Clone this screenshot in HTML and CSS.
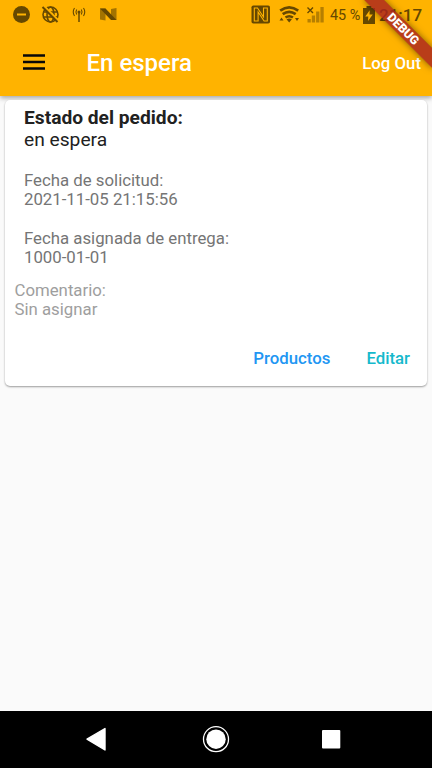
FILE: index.html
```html
<!DOCTYPE html>
<html lang="es">
<head>
<meta charset="utf-8">
<title>En espera</title>
<link rel="stylesheet" href="styles.css">
</head>
<body>
<div class="screen">
  <header class="top">
    <div class="status">
      <svg class="notices" width="130" height="30" viewBox="0 0 130 30">
        <circle cx="21.5" cy="14.5" r="8.5"/>
        <path d="M17 14.5h9" stroke="#ffb300" stroke-width="2"/>
        <g fill="none" stroke="#664800" stroke-width="1.6">
          <circle cx="50.5" cy="14.5" r="7.5"/>
          <ellipse cx="50.5" cy="14.5" rx="3.5" ry="7.5"/>
          <path d="M43.5 12h14M43.5 17h14"/>
          <path d="M44 6l15 15" stroke="#ffb300" stroke-width="2"/>
          <path d="M42.5 7l15 15" stroke-width="2"/>
        </g>
        <g fill="none" stroke="#664800" stroke-width="1.1">
          <path d="M79 12v10" stroke-width="1.5"/>
          <path d="M76.700 9.500q-1.500 2.500 0 5M81.300 9.500q1.500 2.500 0 5M74.500 8q-2.500 4 0 8M83.500 8q2.500 4 0 8"/>
        </g>
        <circle cx="79" cy="12" r="1.500"/>
        <path d="M100 8.500h5.500v12l-5.500-1zM111 9l5.500-1v12H111z" opacity=".6"/>
        <path d="M100 8.500h5.500L116.500 20H111z"/>
      </svg>
      <svg class="signals" width="80" height="30" viewBox="250 0 80 30">
        <rect x="251.500" y="5.500" width="18.500" height="18" rx="1.800"/>
        <path d="M254.300 21V8h3.200l6 9V8h3.800v13h-3.200l-6-9v9z" fill="none" stroke="#ffb300" stroke-width="1.100"/>
        <g fill="none" stroke="#664800" stroke-width="2.700">
          <path d="M280.200 10.700q9-6.500 18 0M282.700 14.200q6.500-4.700 13 0M285.500 17.500q3.700-2.500 7.400 0"/>
        </g>
        <path d="M286.500 19.300q2.700-1.400 5.400 0L289.200 22.500zM279.500 20.500l2-3 2 3zM295 18h4l-2 3z"/>
        <path d="M307.500 7.500l5.500 5.500M313 7.500l-5.500 5.500" stroke="#664800" stroke-width="1.400"/>
        <path d="M307.500 19h3.300v3.500h-3.300zM311.800 15.500h3.300v7h-3.300zM316.100 11.500h3.300v11h-3.300zM320.400 7h3.300v15.500h-3.300z" opacity=".48"/>
      </svg>
      <span class="percent">45 %</span>
      <svg class="battery" width="12" height="18" viewBox="0 0 12 18">
        <path d="M0 2h3.500V0h5v2H12v16H0z"/>
        <path d="M6.700 4.200L2.300 10.500h3L5 15l4.800-6.500H6.500z" fill="#ffb300"/>
      </svg>
      <span class="clock">21:17</span>
    </div>
    <div class="toolbar">
      <svg class="menu" width="22" height="16" viewBox="0 0 22 16"><path d="M0 1.500h22M0 8h22M0 14.500h22" stroke="#080808" stroke-width="2.400"/></svg>
      <h1>En espera</h1>
      <span class="logout">Log Out</span>
    </div>
  </header>
  <main>
    <section class="card">
      <div class="details">
        <h2>Estado del pedido:</h2>
        <p class="state">en espera</p>
        <p class="date">Fecha de solicitud:<br>2021-11-05 21:15:56</p>
        <p class="date">Fecha asignada de entrega:<br>1000-01-01</p>
      </div>
      <p class="comment">Comentario:<br>Sin asignar</p>
      <div class="actions"><span class="products">Productos</span><span class="edit">Editar</span></div>
    </section>
  </main>
  <nav>
    <svg width="432" height="57" viewBox="0 711 432 57" fill="#fff">
      <path d="M87 739.200L105 728.500V750z" stroke="#fff" stroke-width="1.400" stroke-linejoin="round"/>
      <circle cx="216" cy="739.200" r="12.500" fill="none" stroke="#fff" stroke-width="1.300"/>
      <circle cx="216" cy="739.200" r="9.700"/>
      <rect x="322" y="730" width="18.300" height="18.500" rx="1"/>
    </svg>
  </nav>
  <div class="corner"><div class="debug">DEBUG</div></div>
</div>
</body>
</html>
```
FILE: styles.css
```css
* { box-sizing: border-box; }
body { margin: 0; font-family: Roboto, sans-serif; background: #fafafa; }
h1, h2, p { margin: 0; }
.screen { position: relative; width: 432px; height: 768px; overflow: hidden; display: flex; flex-direction: column; }
.top { height: 96px; background: #ffb300; box-shadow: 0 2px 5px rgba(0,0,0,.35); display: flex; flex-direction: column; }
.status { height: 30px; display: flex; align-items: center; color: #664800; fill: #664800; }
.signals { margin-left: 120px; }
.percent { width: 33px; font-size: 14.400px; white-space: nowrap; }
.battery { flex: none; margin-top: -1px; }
.clock { margin-left: 4px; font-size: 17px; font-weight: 500; }
.toolbar { height: 65px; padding: 0 11px 0 23px; display: flex; align-items: center; }
.menu { margin-top: -1px; }
h1 { margin-left: 41.500px; padding-top: 1px; font-size: 24px; font-weight: 500; color: #fff; white-space: nowrap; }
.logout { margin-left: auto; color: #fff; font-size: 16.800px; font-weight: 500; }
main { flex: 1; padding: 4px 5px; }
.card { height: 286px; padding: 6.500px 10px 0; background: #fff; border-radius: 5px; box-shadow: 0 1px 2px rgba(0,0,0,.38); }
.details { padding-left: 9px; }
h2, .state { font-size: 19.200px; line-height: 22.500px; color: #212121; }
h2 { font-weight: 700; }
.state { font-weight: 400; }
.date { margin-top: 19px; font-size: 16.800px; line-height: 19.300px; color: #757575; }
.state + .date { margin-top: 19.500px; }
.comment { margin-top: 14px; margin-left: -.5px; font-size: 16.800px; line-height: 19.300px; color: #9e9e9e; }
.actions { display: flex; justify-content: flex-end; gap: 36px; margin-top: 28px; padding-right: 7px; font-size: 16.800px; font-weight: 500; line-height: 20px; }
.products { color: #2196f3; }
.edit { color: #15b9cc; }
nav { height: 57px; background: #000; }
nav svg { display: block; }
.corner { position: absolute; top: 0; right: 0; width: 90px; height: 90px; overflow: hidden; }
.debug { position: absolute; left: 13px; top: 22px; width: 96px; height: 14.400px; transform: rotate(45deg); background: rgba(170,35,30,.82); box-shadow: 0 0 7px rgba(0,0,0,.5); color: #fff; font-size: 12.200px; font-weight: 900; line-height: 14.400px; text-align: center; }
```
